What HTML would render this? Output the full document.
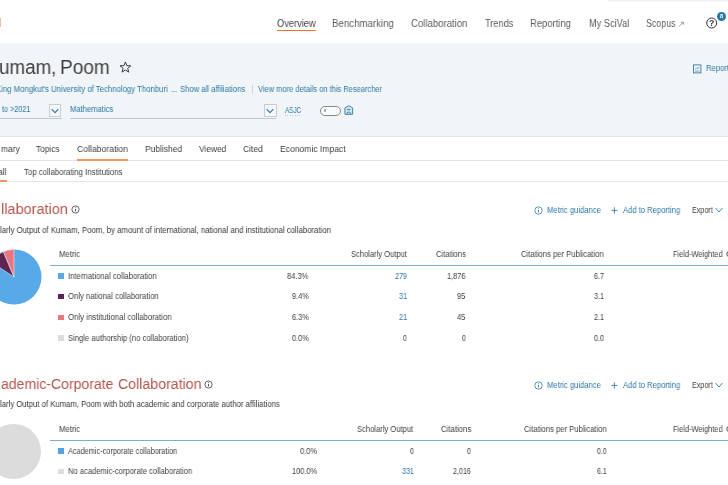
<!DOCTYPE html>
<html><head><meta charset="utf-8">
<style>
*{box-sizing:border-box;margin:0;padding:0}
html,body{width:728px;height:485px;overflow:hidden;background:#fff}
body{font-family:"Liberation Sans",sans-serif;color:#323232;position:relative}
.t{position:absolute;white-space:nowrap;line-height:1;transform-origin:0 0;will-change:transform}
.a{position:absolute}
</style></head><body>
<!-- top shadow hint -->
<div class="a" style="left:608px;top:0;width:120px;height:2px;background:linear-gradient(#ededed,#fff)"></div>
<!-- logo sliver -->
<div class="a" style="left:0;top:17.8px;width:1.1px;height:9px;background:#f6bc9c"></div>
<!-- nav underline -->
<div class="a" style="left:277px;top:29.5px;width:39px;height:1.4px;background:#ea7424"></div>
<!-- scopus arrow -->
<svg class="a" style="left:678px;top:21px" width="7" height="6" viewBox="0 0 7 6"><path d="M1.1 5.1 L5.4 1.3 M2.9 1.3 H5.4 V3.7" fill="none" stroke="#808080" stroke-width="0.75"/></svg>
<!-- help -->
<svg class="a" style="left:705px;top:16px;will-change:transform" width="14" height="14" viewBox="0 0 14 14"><circle cx="6.7" cy="7" r="5" fill="#fff" stroke="#323232" stroke-width="1"/><text x="6.7" y="10.1" font-size="8.8" font-family="Liberation Sans" font-weight="bold" text-anchor="middle" fill="#323232">?</text></svg>
<div class="a" style="left:717px;top:12.1px;width:8.8px;height:8.8px;border-radius:50%;background:#2a78a6"></div>
<div class="t" style="left:719.7px;top:14px;font-size:5.6px;color:#fff;font-weight:bold">8</div>

<!-- header band -->
<div class="a" style="left:0;top:43px;width:728px;height:94px;background:#f1f5f8;border-bottom:1px solid #e2e6e9"></div>
<!-- star -->
<svg class="a" style="left:119.3px;top:61.3px" width="12.8" height="12.6" viewBox="0 0 12 12"><path d="M6 0.9 L7.35 4.4 L11.1 4.6 L8.2 6.95 L9.15 10.6 L6 8.55 L2.85 10.6 L3.8 6.95 L0.9 4.6 L4.65 4.4 Z" fill="none" stroke="#383838" stroke-width="0.95" stroke-linejoin="miter"/></svg>
<!-- affil separator -->
<div class="a" style="left:251.5px;top:85px;width:1px;height:9px;background:#cfd6db"></div>
<!-- report icon -->
<svg class="a" style="left:693px;top:63.5px" width="9" height="10" viewBox="0 0 9 10"><rect x="0.5" y="0.9" width="7.4" height="8" fill="none" stroke="#2e7ca8" stroke-width="0.9"/><path d="M2 7.1 H6.4 M2.2 5.4 L3.6 3.8 L4.6 4.8 L6.2 2.9" fill="none" stroke="#2e7ca8" stroke-width="0.65"/></svg>
<!-- select 1 -->
<div class="a" style="left:0;top:118.2px;width:61.5px;height:1.3px;background:#c0c8ce"></div>
<div class="a" style="left:48.8px;top:104px;width:12.7px;height:12.6px;border:1px solid #c9ced3;background:#f5f7f9"></div>
<svg class="a" style="left:51px;top:108px" width="8" height="6" viewBox="0 0 8 6"><path d="M0.7 1.1 L4 4.7 L7.3 1.1" fill="none" stroke="#2e7ca8" stroke-width="1.15"/></svg>
<!-- select 2 -->
<div class="a" style="left:69.7px;top:118.2px;width:206.6px;height:1.3px;background:#c0c8ce"></div>
<div class="a" style="left:264px;top:104px;width:12.5px;height:12.6px;border:1px solid #c9ced3;background:#f5f7f9"></div>
<svg class="a" style="left:266.2px;top:108px" width="8" height="6" viewBox="0 0 8 6"><path d="M0.7 1.1 L4 4.7 L7.3 1.1" fill="none" stroke="#2e7ca8" stroke-width="1.15"/></svg>
<!-- ASJC dotted -->
<div class="a" style="left:285px;top:114.6px;width:16.5px;height:1px;background:repeating-linear-gradient(90deg,#bccdd7 0 1px,transparent 1px 2.4px)"></div>
<!-- toggle -->
<div class="a" style="left:320px;top:105.8px;width:20.7px;height:9.9px;border:1px solid #888;border-radius:5px;background:#fafbfc"></div>
<div class="a" style="left:323.5px;top:109.3px;width:2.5px;height:2.5px;border-radius:50%;background:#a0a0a0"></div>
<!-- institution icon -->
<svg class="a" style="left:344.3px;top:105px" width="10" height="10" viewBox="0 0 10 10"><path d="M0.95 9.3 V2.9 L4.8 0.7 L8.65 2.9 V9.3 Z" fill="rgba(46,124,168,0.15)" stroke="#2e7ca8" stroke-width="0.9" stroke-linejoin="round"/><path d="M3.3 4.6 H6.3" stroke="#2e7ca8" stroke-width="1"/><path d="M2.9 9.3 L3.6 7.2 H6 L6.7 9.3" fill="none" stroke="#2e7ca8" stroke-width="0.8"/></svg>

<!-- tab lines -->
<div class="a" style="left:0;top:159.5px;width:728px;height:1px;background:#e4e4e4"></div>
<div class="a" style="left:76.7px;top:159px;width:51.3px;height:1.8px;background:#ee9764"></div>
<div class="a" style="left:0;top:181.2px;width:728px;height:1px;background:#e6e6e6"></div>
<div class="a" style="left:0;top:180.2px;width:6.8px;height:1.8px;background:#ee9764"></div>

<!-- SECTION 1 icons -->
<svg class="a" style="left:70.7px;top:205.3px" width="9" height="9" viewBox="0 0 9 9"><circle cx="4.5" cy="4.5" r="3.6" fill="none" stroke="#3c3c3c" stroke-width="0.8"/><path d="M4.5 4 V6.4" stroke="#3c3c3c" stroke-width="0.9"/><circle cx="4.5" cy="2.8" r="0.5" fill="#3c3c3c"/></svg>
<svg class="a" style="left:533.5px;top:205.9px" width="9" height="9" viewBox="0 0 9 9"><circle cx="4.5" cy="4.5" r="3.7" fill="none" stroke="#2e7ca8" stroke-width="0.8"/><path d="M4.5 4 V6.4" stroke="#2e7ca8" stroke-width="0.9"/><circle cx="4.5" cy="2.8" r="0.5" fill="#2e7ca8"/></svg>
<svg class="a" style="left:611.4px;top:206.8px" width="8" height="8" viewBox="0 0 8 8"><path d="M0.3 3.4 H6.5 M3.4 0.3 V6.5" stroke="#2e7ca8" stroke-width="0.85"/></svg>
<svg class="a" style="left:714.8px;top:207.3px" width="8" height="7" viewBox="0 0 8 7"><path d="M0.5 1 L4 5 L7.5 1" fill="none" stroke="#2e7ca8" stroke-width="0.9"/></svg>
<!-- pie 1 -->
<svg class="a" style="left:-14.5px;top:248.9px" width="56" height="56" viewBox="-28 -28 56 56">
<circle r="27.5" fill="#58a9e8"/>
<path d="M0 0 L-22.94 -15.17 A27.5 27.5 0 0 1 -10.60 -25.37 Z" fill="#5c2553" stroke="#fff" stroke-width="0.5" stroke-linejoin="round"/>
<path d="M0 0 L-10.60 -25.37 A27.5 27.5 0 0 1 0 -27.5 Z" fill="#ea7681" stroke="#fff" stroke-width="0.5" stroke-linejoin="round"/>
</svg>
<div class="a" style="left:50px;top:264.8px;width:678px;height:1px;background:#80aece"></div>
<div class="a" style="left:58.3px;top:273.2px;width:5.5px;height:5.5px;background:#58a9e8"></div>
<div class="a" style="left:58.3px;top:293.95px;width:5.5px;height:5.5px;background:#5c2553"></div>
<div class="a" style="left:58.3px;top:314.7px;width:5.5px;height:5.5px;background:#ea7681"></div>
<div class="a" style="left:58.3px;top:335.45px;width:5.5px;height:5.5px;background:#dcdcdc"></div>

<!-- SECTION 2 icons -->
<svg class="a" style="left:204px;top:380.2px" width="9" height="9" viewBox="0 0 9 9"><circle cx="4.5" cy="4.5" r="3.6" fill="none" stroke="#3c3c3c" stroke-width="0.8"/><path d="M4.5 4 V6.4" stroke="#3c3c3c" stroke-width="0.9"/><circle cx="4.5" cy="2.8" r="0.5" fill="#3c3c3c"/></svg>
<svg class="a" style="left:533.8px;top:380.8px" width="9" height="9" viewBox="0 0 9 9"><circle cx="4.5" cy="4.5" r="3.7" fill="none" stroke="#2e7ca8" stroke-width="0.8"/><path d="M4.5 4 V6.4" stroke="#2e7ca8" stroke-width="0.9"/><circle cx="4.5" cy="2.8" r="0.5" fill="#2e7ca8"/></svg>
<svg class="a" style="left:611.4px;top:381.8px" width="8" height="8" viewBox="0 0 8 8"><path d="M0.3 3.4 H6.5 M3.4 0.3 V6.5" stroke="#2e7ca8" stroke-width="0.85"/></svg>
<svg class="a" style="left:714.8px;top:382.3px" width="8" height="7" viewBox="0 0 8 7"><path d="M0.5 1 L4 5 L7.5 1" fill="none" stroke="#2e7ca8" stroke-width="0.9"/></svg>
<!-- circle 2 -->
<div class="a" style="left:-14.1px;top:424.1px;width:55.3px;height:55.3px;border-radius:50%;background:#dcdcdc"></div>
<div class="a" style="left:50px;top:439.8px;width:678px;height:1px;background:#80aece"></div>
<div class="a" style="left:58.3px;top:448.3px;width:5.4px;height:5.4px;background:#52a2e6"></div>
<div class="a" style="left:58.3px;top:469px;width:5.4px;height:5.4px;background:#dedede"></div>

<div class="t" style="left:277.00px;top:18.13px;font-size:10.6px;color:#444;transform:scaleX(0.8764);">Overview</div>
<div class="t" style="left:332.00px;top:18.13px;font-size:10.6px;color:#5a5a5a;transform:scaleX(0.9141);">Benchmarking</div>
<div class="t" style="left:411.00px;top:18.13px;font-size:10.6px;color:#5a5a5a;transform:scaleX(0.9035);">Collaboration</div>
<div class="t" style="left:485.00px;top:18.13px;font-size:10.6px;color:#5a5a5a;transform:scaleX(0.8674);">Trends</div>
<div class="t" style="left:530.00px;top:18.13px;font-size:10.6px;color:#5a5a5a;transform:scaleX(0.8905);">Reporting</div>
<div class="t" style="left:588.50px;top:18.13px;font-size:10.6px;color:#5a5a5a;transform:scaleX(0.8705);">My SciVal</div>
<div class="t" style="left:645.75px;top:18.13px;font-size:10.6px;color:#5a5a5a;transform:scaleX(0.8348);">Scopus</div>
<div class="t" style="left:-0.57px;top:57.68px;font-size:19.4px;color:#3e3e3e;transform:scaleX(0.9688);">umam,</div>
<div class="t" style="left:60.42px;top:57.68px;font-size:19.4px;color:#3e3e3e;transform:scaleX(0.9814);">Poom</div>
<div class="t" style="left:-4.20px;top:84.99px;font-size:8.4px;color:#2b78a4;transform:scaleX(0.9277);">King Mongkut's University of Technology Thonburi</div>
<div class="t" style="left:171.00px;top:84.99px;font-size:8.4px;color:#2b78a4;transform:scaleX(0.9018);">...</div>
<div class="t" style="left:179.50px;top:84.99px;font-size:8.4px;color:#2b78a4;transform:scaleX(0.9170);">Show all affiliations</div>
<div class="t" style="left:257.75px;top:84.99px;font-size:8.4px;color:#2b78a4;transform:scaleX(0.8953);">View more details on this Researcher</div>
<div class="t" style="left:1.75px;top:105.07px;font-size:8.3px;color:#2b78a4;transform:scaleX(0.8705);">to &gt;2021</div>
<div class="t" style="left:70.00px;top:105.07px;font-size:8.3px;color:#2b78a4;transform:scaleX(0.9172);">Mathematics</div>
<div class="t" style="left:285.00px;top:105.99px;font-size:8.4px;color:#2b78a4;transform:scaleX(0.7538);">ASJC</div>
<div class="t" style="left:705.60px;top:63.99px;font-size:8.4px;color:#2b78a4;transform:scaleX(0.9182);">Report</div>
<div class="t" style="left:0.50px;top:144.14px;font-size:9.4px;color:#404040;transform:scaleX(0.8985);">mary</div>
<div class="t" style="left:36.25px;top:144.14px;font-size:9.4px;color:#404040;transform:scaleX(0.8834);">Topics</div>
<div class="t" style="left:76.75px;top:144.14px;font-size:9.4px;color:#404040;transform:scaleX(0.9222);">Collaboration</div>
<div class="t" style="left:144.50px;top:144.14px;font-size:9.4px;color:#404040;transform:scaleX(0.9033);">Published</div>
<div class="t" style="left:198.75px;top:144.14px;font-size:9.4px;color:#404040;transform:scaleX(0.8892);">Viewed</div>
<div class="t" style="left:242.75px;top:144.14px;font-size:9.4px;color:#404040;transform:scaleX(0.8998);">Cited</div>
<div class="t" style="left:279.75px;top:144.14px;font-size:9.4px;color:#404040;transform:scaleX(0.9129);">Economic Impact</div>
<div class="t" style="left:-2.20px;top:167.74px;font-size:8.7px;color:#404040;transform:scaleX(0.9701);">all</div>
<div class="t" style="left:23.50px;top:167.74px;font-size:8.7px;color:#404040;transform:scaleX(0.8977);">Top collaborating Institutions</div>
<div class="t" style="left:1.16px;top:201.06px;font-size:15.4px;color:#b4564a;transform:scaleX(0.9416);">llaboration</div>
<div class="t" style="left:0.30px;top:225.82px;font-size:8.6px;color:#363636;transform:scaleX(0.9081);">larly Output of Kumam, Poom, by amount of international, national and institutional collaboration</div>
<div class="t" style="left:547.00px;top:205.99px;font-size:8.4px;color:#2b78a4;transform:scaleX(0.9098);">Metric guidance</div>
<div class="t" style="left:622.80px;top:205.99px;font-size:8.4px;color:#2b78a4;transform:scaleX(0.9099);">Add to Reporting</div>
<div class="t" style="left:691.50px;top:205.99px;font-size:8.4px;color:#404040;transform:scaleX(0.8562);">Export</div>
<div class="t" style="left:0.80px;top:376.06px;font-size:15.4px;color:#b4564a;transform:scaleX(0.9134);">ademic-Corporate</div>
<div class="t" style="left:117.80px;top:376.06px;font-size:15.4px;color:#b4564a;transform:scaleX(0.9198);">Collaboration</div>
<div class="t" style="left:0.30px;top:399.82px;font-size:8.6px;color:#363636;transform:scaleX(0.8986);">larly Output of Kumam, Poom with both academic and corporate author affiliations</div>
<div class="t" style="left:547.00px;top:380.99px;font-size:8.4px;color:#2b78a4;transform:scaleX(0.9098);">Metric guidance</div>
<div class="t" style="left:622.80px;top:380.99px;font-size:8.4px;color:#2b78a4;transform:scaleX(0.9099);">Add to Reporting</div>
<div class="t" style="left:691.50px;top:380.99px;font-size:8.4px;color:#404040;transform:scaleX(0.8562);">Export</div>
<div class="t" style="left:59.00px;top:249.99px;font-size:8.4px;color:#404040;transform:scaleX(0.9288);">Metric</div>
<div class="t" style="left:351.00px;top:249.99px;font-size:8.4px;color:#404040;transform:scaleX(0.9028);">Scholarly Output</div>
<div class="t" style="left:436.00px;top:249.99px;font-size:8.4px;color:#404040;transform:scaleX(0.9183);">Citations</div>
<div class="t" style="left:521.25px;top:249.99px;font-size:8.4px;color:#404040;transform:scaleX(0.9156);">Citations per Publication</div>
<div class="t" style="left:672.80px;top:249.99px;font-size:8.4px;color:#404040;transform:scaleX(0.8830);">Field-Weighted</div>
<div class="t" style="left:726.00px;top:249.99px;font-size:8.4px;color:#404040;transform:scaleX(1.0833);">C</div>
<div class="t" style="left:68.00px;top:271.99px;font-size:8.4px;color:#404040;transform:scaleX(0.9246);">International collaboration</div>
<div class="t" style="left:287.00px;top:271.99px;font-size:8.4px;color:#404040;transform:scaleX(0.8951);">84.3%</div>
<div class="t" style="left:395.25px;top:271.99px;font-size:8.4px;color:#2b78a4;transform:scaleX(0.8557);">279</div>
<div class="t" style="left:447.00px;top:271.99px;font-size:8.4px;color:#404040;transform:scaleX(0.8803);">1,876</div>
<div class="t" style="left:594.00px;top:271.99px;font-size:8.4px;color:#404040;transform:scaleX(0.8553);">6.7</div>
<div class="t" style="left:68.00px;top:291.99px;font-size:8.4px;color:#404040;transform:scaleX(0.9188);">Only national collaboration</div>
<div class="t" style="left:291.50px;top:291.99px;font-size:8.4px;color:#404040;transform:scaleX(0.8782);">9.4%</div>
<div class="t" style="left:399.00px;top:291.99px;font-size:8.4px;color:#2b78a4;transform:scaleX(0.8801);">31</div>
<div class="t" style="left:457.25px;top:291.99px;font-size:8.4px;color:#404040;transform:scaleX(0.8801);">95</div>
<div class="t" style="left:594.00px;top:291.99px;font-size:8.4px;color:#404040;transform:scaleX(0.8553);">3.1</div>
<div class="t" style="left:68.00px;top:312.99px;font-size:8.4px;color:#404040;transform:scaleX(0.9319);">Only institutional collaboration</div>
<div class="t" style="left:291.50px;top:312.99px;font-size:8.4px;color:#404040;transform:scaleX(0.8782);">6.3%</div>
<div class="t" style="left:399.00px;top:312.99px;font-size:8.4px;color:#2b78a4;transform:scaleX(0.8801);">21</div>
<div class="t" style="left:457.25px;top:312.99px;font-size:8.4px;color:#404040;transform:scaleX(0.8801);">45</div>
<div class="t" style="left:594.00px;top:312.99px;font-size:8.4px;color:#404040;transform:scaleX(0.8553);">2.1</div>
<div class="t" style="left:68.00px;top:333.99px;font-size:8.4px;color:#404040;transform:scaleX(0.9150);">Single authorship (no collaboration)</div>
<div class="t" style="left:291.50px;top:333.99px;font-size:8.4px;color:#404040;transform:scaleX(0.8782);">0.0%</div>
<div class="t" style="left:403.40px;top:333.99px;font-size:8.4px;color:#404040;transform:scaleX(0.8200);">0</div>
<div class="t" style="left:461.60px;top:333.99px;font-size:8.4px;color:#404040;transform:scaleX(0.8300);">0</div>
<div class="t" style="left:594.00px;top:333.99px;font-size:8.4px;color:#404040;transform:scaleX(0.8553);">0.0</div>
<div class="t" style="left:59.00px;top:424.99px;font-size:8.4px;color:#404040;transform:scaleX(0.9288);">Metric</div>
<div class="t" style="left:357.00px;top:424.99px;font-size:8.4px;color:#404040;transform:scaleX(0.9068);">Scholarly Output</div>
<div class="t" style="left:441.00px;top:424.99px;font-size:8.4px;color:#404040;transform:scaleX(0.9260);">Citations</div>
<div class="t" style="left:524.25px;top:424.99px;font-size:8.4px;color:#404040;transform:scaleX(0.9156);">Citations per Publication</div>
<div class="t" style="left:672.80px;top:424.99px;font-size:8.4px;color:#404040;transform:scaleX(0.8830);">Field-Weighted</div>
<div class="t" style="left:726.00px;top:424.99px;font-size:8.4px;color:#404040;transform:scaleX(1.0833);">C</div>
<div class="t" style="left:68.00px;top:446.99px;font-size:8.4px;color:#404040;transform:scaleX(0.8753);">Academic-corporate collaboration</div>
<div class="t" style="left:299.50px;top:446.99px;font-size:8.4px;color:#404040;transform:scaleX(0.8909);">0.0%</div>
<div class="t" style="left:409.60px;top:446.99px;font-size:8.4px;color:#404040;transform:scaleX(0.8300);">0</div>
<div class="t" style="left:466.80px;top:446.99px;font-size:8.4px;color:#404040;transform:scaleX(0.8400);">0</div>
<div class="t" style="left:597.25px;top:446.99px;font-size:8.4px;color:#404040;transform:scaleX(0.8344);">0.0</div>
<div class="t" style="left:68.00px;top:466.99px;font-size:8.4px;color:#404040;transform:scaleX(0.9074);">No academic-corporate collaboration</div>
<div class="t" style="left:291.50px;top:466.99px;font-size:8.4px;color:#404040;transform:scaleX(0.8806);">100.0%</div>
<div class="t" style="left:401.50px;top:466.99px;font-size:8.4px;color:#2b78a4;transform:scaleX(0.8557);">331</div>
<div class="t" style="left:453.00px;top:466.99px;font-size:8.4px;color:#404040;transform:scaleX(0.8451);">2,016</div>
<div class="t" style="left:597.25px;top:466.99px;font-size:8.4px;color:#404040;transform:scaleX(0.8344);">6.1</div>
</body></html>
